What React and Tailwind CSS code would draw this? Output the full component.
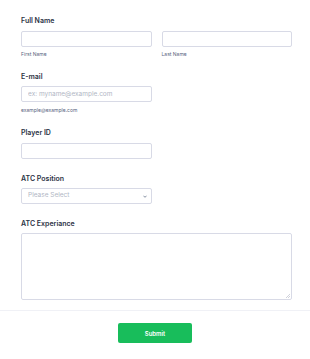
export default function App() {
  const label = "text-[7px] font-semibold text-[#2c3345] leading-none";
  const sub = "text-[5px] text-[#57647e] leading-none";
  const input =
    "block h-4 w-full rounded-[2px] border border-[#d8dae6] bg-white px-1.5 text-[6.5px] text-[#2c3345] placeholder:text-[#b1b6c4] outline-none";

  return (
    <div
      className="w-[310px] h-[359px] bg-white"
      style={{ fontFamily: "Inter, 'Noto Sans', sans-serif" }}
    >
      <div className="pl-[21px] pr-[18px] pt-[17px]">
        {/* Full name */}
        <p className={label}>Full Name</p>
        <div className="mt-[7px] flex gap-[10px]">
          <div className="w-[131px]">
            <input className={input} />
            <p className={`${sub} mt-[5px]`}>First Name</p>
          </div>
          <div className="w-[131px]">
            <input className={input} />
            <p className={`${sub} mt-[5px]`}>Last Name</p>
          </div>
        </div>

        {/* Email */}
        <p className={`${label} mt-[16px]`}>E-mail</p>
        <div className="mt-[6px] w-[131px]">
          <input className={input} placeholder="ex: myname@example.com" />
          <p className={`${sub} mt-[6px]`}>example@example.com</p>
        </div>

        {/* Player ID */}
        <p className={`${label} mt-[16px]`}>Player ID</p>
        <div className="mt-[7px] w-[131px]">
          <input className={input} />
        </div>

        {/* ATC Position */}
        <p className={`${label} mt-[16px]`}>ATC Position</p>
        <div className="mt-[6px] w-[131px] h-4 rounded-[2px] border border-[#d8dae6] flex items-center justify-between pl-1.5 pr-[4px]">
          <span className="text-[6.5px] text-[#b1b6c4]">Please Select</span>
          <svg width="4" height="3" viewBox="0 0 10 6" fill="none">
            <path d="M1 1l4 4 4-4" stroke="#57647e" strokeWidth="1.8" />
          </svg>
        </div>

        {/* ATC Experiance */}
        <p className={`${label} mt-[16px]`}>ATC Experiance</p>
        <div className="mt-[6px] w-[271px] h-[67px] rounded-[2px] border border-[#d8dae6] relative">
          <svg
            className="absolute right-[1px] bottom-[1px]"
            width="4"
            height="4"
            viewBox="0 0 4 4"
          >
            <path d="M4 0L0 4M4 2L2 4" stroke="#b1b6c4" strokeWidth="0.6" />
          </svg>
        </div>
      </div>

      <div className="mt-[10px] border-t border-[#f0f1f6] flex justify-center pt-[12px]">
        <button className="w-[74px] h-[20px] rounded-[2px] bg-[#18bd5b] text-white text-[6px] font-semibold">
          Submit
        </button>
      </div>
    </div>
  );
}
